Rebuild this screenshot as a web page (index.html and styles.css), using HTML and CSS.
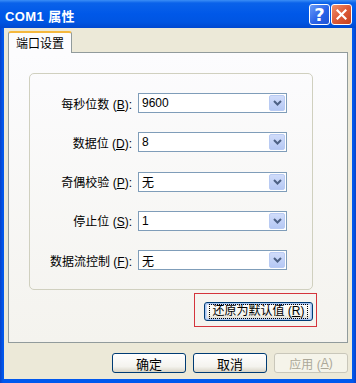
FILE: index.html
```html
<!DOCTYPE html>
<html lang="zh-CN">
<head>
  <meta charset="UTF-8" />
  <title>COM1 属性</title>
  <link rel="stylesheet" href="styles.css">
</head>
<body>
  <div class="window">
    <div class="titlebar">
      <span class="title">COM1 属性</span>
      <div class="title-buttons">
        <span class="tbtn help">?</span>
        <span class="tbtn close">
          <svg width="11" height="11" viewBox="0 0 11 11"><path d="M1.5 1.5 L9.5 9.5 M9.5 1.5 L1.5 9.5" stroke="#fff" stroke-width="2.2" stroke-linecap="square"/></svg>
        </span>
      </div>
    </div>

    <div class="body">
      <div class="tabs">
        <div class="tab">端口设置</div>
      </div>

      <div class="panel">
        <div class="group">
          <div class="row">
            <label>每秒位数 (<u>B</u>):</label>
            <div class="select"><span>9600</span><i class="arrow"><svg width="9" height="6" viewBox="0 0 9 6"><path d="M1 1 L4.5 4.5 L8 1" fill="none" stroke="#4d6185" stroke-width="2"/></svg></i></div>
          </div>
          <div class="row">
            <label>数据位 (<u>D</u>):</label>
            <div class="select"><span>8</span><i class="arrow"><svg width="9" height="6" viewBox="0 0 9 6"><path d="M1 1 L4.5 4.5 L8 1" fill="none" stroke="#4d6185" stroke-width="2"/></svg></i></div>
          </div>
          <div class="row">
            <label>奇偶校验 (<u>P</u>):</label>
            <div class="select"><span>无</span><i class="arrow"><svg width="9" height="6" viewBox="0 0 9 6"><path d="M1 1 L4.5 4.5 L8 1" fill="none" stroke="#4d6185" stroke-width="2"/></svg></i></div>
          </div>
          <div class="row">
            <label>停止位 (<u>S</u>):</label>
            <div class="select"><span>1</span><i class="arrow"><svg width="9" height="6" viewBox="0 0 9 6"><path d="M1 1 L4.5 4.5 L8 1" fill="none" stroke="#4d6185" stroke-width="2"/></svg></i></div>
          </div>
          <div class="row">
            <label>数据流控制 (<u>F</u>):</label>
            <div class="select"><span>无</span><i class="arrow"><svg width="9" height="6" viewBox="0 0 9 6"><path d="M1 1 L4.5 4.5 L8 1" fill="none" stroke="#4d6185" stroke-width="2"/></svg></i></div>
          </div>
        </div>

        <div class="highlight">
          <button class="btn focus"><span>还原为默认值 (<u>R</u>)</span></button>
        </div>
      </div>

      <div class="actions">
        <button class="btn">确定</button>
        <button class="btn">取消</button>
        <button class="btn disabled">应用 (<u>A</u>)</button>
      </div>
    </div>
  </div>
</body>
</html>
```

FILE: styles.css
```css
* {
  box-sizing: border-box;
  margin: 0;
  padding: 0;
}

body {
  width: 356px;
  height: 383px;
  overflow: hidden;
  font-family: "Liberation Sans", "Noto Sans CJK SC", sans-serif;
  font-size: 12px;
  color: #000;
}

.window {
  width: 356px;
  height: 383px;
  display: flex;
  flex-direction: column;
  background: linear-gradient(to right, #0842c8, #0058ee 3px, #0058ee calc(100% - 3px), #0842c8);
}

/* title bar */
.titlebar {
  height: 28px;
  flex: none;
  display: flex;
  justify-content: space-between;
  align-items: flex-start;
  padding: 0 4px 0 5px;
  background: linear-gradient(to bottom, #3b8ef6 0, #0a62ea 3px, #0058e8 14px, #0055e2 22px, #0048d0 28px);
}
.titlebar .title {
  margin-top: 6px;
  color: #fff;
  font-weight: bold;
  font-size: 13px;
  letter-spacing: 0.4px;
}
.title-buttons {
  display: flex;
  gap: 1px;
  margin-top: 4px;
}
.tbtn {
  width: 21px;
  height: 21px;
  border: 1px solid #fff;
  border-radius: 3px;
  display: flex;
  align-items: center;
  justify-content: center;
  color: #fff;
}
.tbtn.help {
  background: linear-gradient(135deg, #6a9cf8, #2a63e8 55%, #1f52d4);
  font-weight: bold;
  font-size: 18px;
  line-height: 1;
  font-family: "DejaVu Sans", sans-serif;
}
.tbtn.close {
  background: linear-gradient(135deg, #f0906c, #dd5a38 50%, #c6401c);
}

/* dialog body */
.body {
  flex: 1;
  margin: 0 4px 4px 4px;
  padding: 3px 4px 0 4px;
  background: #ece9d8;
  display: flex;
  flex-direction: column;
}

.tabs {
  display: flex;
  height: 21px;
  flex: none;
}
.tab {
  position: relative;
  z-index: 1;
  width: 64px;
  height: 22px;
  background: #fcfcfe;
  border: 1px solid #919b9c;
  border-bottom: none;
  border-top: 2px solid #f5b83e;
  border-radius: 3px 3px 0 0;
  display: flex;
  align-items: center;
  justify-content: center;
  padding-bottom: 1px;
}

.panel {
  height: 291px;
  flex: none;
  border: 1px solid #919b9c;
  background: linear-gradient(to bottom, #fcfcfe, #f4f3ee);
  padding: 20px 0 0 20px;
  display: flex;
  flex-direction: column;
}

.group {
  width: 284px;
  height: 217px;
  border: 1px solid #d0d0bf;
  border-radius: 5px;
  padding-top: 19px;
  display: flex;
  flex-direction: column;
  gap: 19.25px;
}

.row {
  display: flex;
  align-items: center;
  height: 20px;
  gap: 6px;
}
.row label {
  width: 102px;
  text-align: right;
  white-space: nowrap;
}
.select {
  width: 149px;
  height: 20px;
  border: 1px solid #7f9db9;
  background: #fff;
  display: flex;
  align-items: center;
  justify-content: space-between;
  padding: 1px 1px 1px 3px;
}
.select span {
  font-size: 12px;
}
.arrow {
  width: 16px;
  height: 16px;
  border: 1px solid #b9cbf3;
  border-radius: 2px;
  background: linear-gradient(to bottom, #d0dcfa, #b5c8f4);
  display: flex;
  align-items: center;
  justify-content: center;
}

.highlight {
  align-self: flex-end;
  margin: 3px 30px 0 0;
  border: 1px solid #d4343c;
  padding: 8px 3px 5px 9px;
}

/* buttons */
.btn {
  font-family: "Liberation Sans", "Noto Sans CJK SC", sans-serif;
  font-size: 12px;
  color: #000;
  height: 20px;
  border: 1px solid #003c74;
  border-radius: 3px;
  background: linear-gradient(to bottom, #ffffff, #f4f3ee 70%, #d8d4c6);
  display: flex;
  align-items: center;
  justify-content: center;
}
.btn.focus {
  width: 109px;
  height: 19px;
  box-shadow: inset 0 0 0 1px #a8c4f0, inset 0 0 0 2px #c6d8f8;
}
.btn.focus span {
  padding: 0 2px;
  outline: 1px dotted #000;
  line-height: 13px;
}
.btn.disabled {
  border-color: #c9c7ba;
  color: #aca899;
  background: #f5f4ea;
}

.actions {
  display: flex;
  justify-content: flex-end;
  gap: 7px;
  margin-top: 10px;
}
.actions .btn {
  width: 74px;
  font-size: 13px;
}
.actions .btn.disabled {
  font-size: 12px;
}
```
